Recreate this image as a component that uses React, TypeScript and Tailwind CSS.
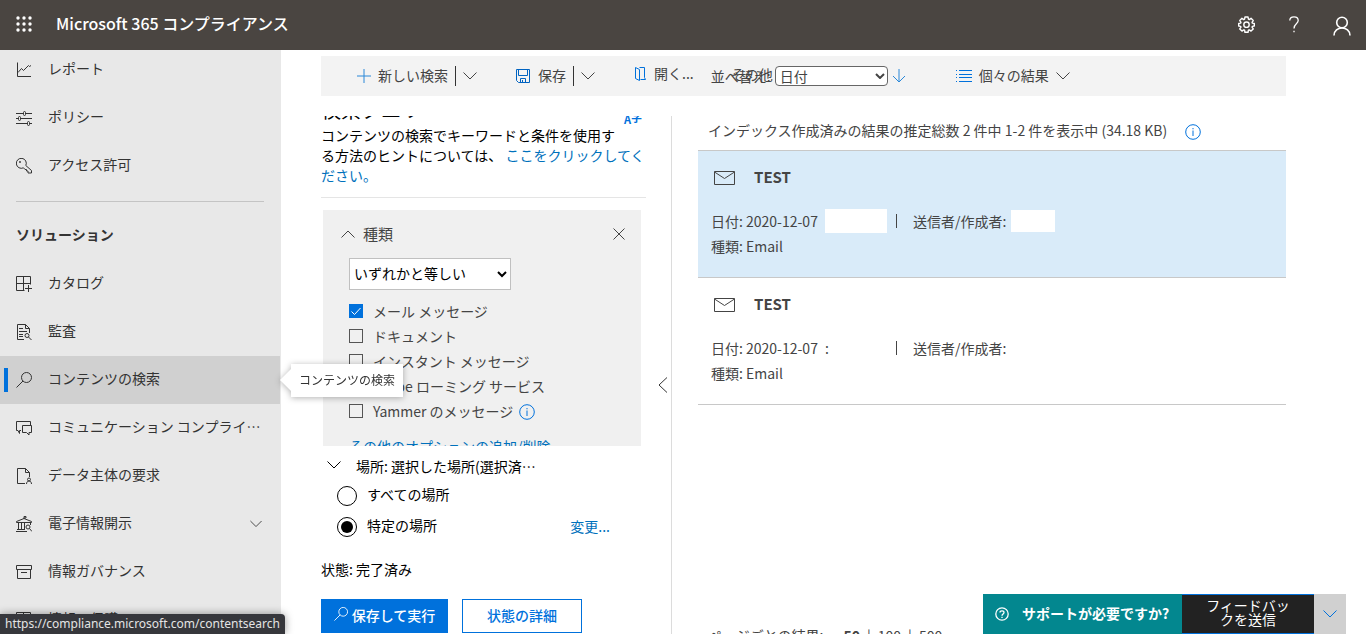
import React from "react";

interface IconProps {
  className?: string;
}

const ChevronIcon = ({ className = "w-3.5" }: IconProps) => (
  <svg viewBox="0 0 14 8" fill="none" stroke="currentColor" className={`h-2 shrink-0 ${className}`}>
    <path d="M.5.5 7 7 13.5.5" />
  </svg>
);

const NavSvg = ({ children }: { children: React.ReactNode }) => (
  <svg viewBox="0 0 16 16" fill="none" stroke="currentColor" className="w-4 h-4 shrink-0">
    {children}
  </svg>
);

const ReportIcon = () => (
  <NavSvg>
    <path d="M1.5.5v14H15M2 10.5l3.500-4 2 2 5-5 1 1 1.500-1" />
  </NavSvg>
);

const PolicyIcon = () => (
  <NavSvg>
    <path d="M0 3.500h7M10 3.500h6M0 8.500h2M5 8.500h11M0 13.500h11M14 13.500h2" />
    <rect x="7.500" y="1.500" width="2" height="4" rx="1" />
    <rect x="2.500" y="6.500" width="2" height="4" rx="1" />
    <rect x="11.500" y="11.500" width="2" height="4" rx="1" />
  </NavSvg>
);

const KeyIcon = () => (
  <NavSvg>
    <path d="M9.800 7.500a5 5 0 1 0-2.300 2.300L9 11.500h1.500v1.500H12v2h3.500v-2.500z" />
    <circle cx="4" cy="4" r=".6" />
  </NavSvg>
);

const CatalogIcon = () => (
  <NavSvg>
    <path d="M14.500 8.500v-8H.5v14h8M7.500.5v14M.5 7.500h14M12.500 9v7M9 12.500h7" />
  </NavSvg>
);

const AuditIcon = () => (
  <NavSvg>
    <path d="M8 15.500H1.500V.5h8l4 4V9M9.500.5v4h4M3 4.500h4M3 7.500h8M3 10.500h4M3 12.500h4" />
    <circle cx="11" cy="11.500" r="2" />
    <path d="m12.500 13 3 3" />
  </NavSvg>
);

const SearchIcon = ({ className = "w-4 h-4" }: IconProps) => (
  <svg viewBox="0 0 16 16" fill="none" stroke="currentColor" className={`shrink-0 ${className}`}>
    <circle cx="10.500" cy="5.500" r="5" />
    <path d="M7 9 .5 15.500" />
  </svg>
);

const ChatIcon = () => (
  <NavSvg>
    <path d="M5 10.500H3.500v3L2 10.500H.5v-9h14v4" />
    <path d="M6.500 5.500h9v7H13v2.500l-2.500-2.500h-4z" />
  </NavSvg>
);

const DataIcon = () => (
  <NavSvg>
    <path d="M9 15.500H1.500V.5h8l4 4V9M9.500.5v4h4" />
    <circle cx="13" cy="11.500" r="1.500" />
    <path d="M10.500 16c0-4 5-4 5 0" />
  </NavSvg>
);

const DiscoveryIcon = () => (
  <NavSvg>
    <path d="M8 3V.5h2V2H8M.5 6.500V5.500L8 2.500l7.500 3v1zM2.500 7v6M5.500 7v6M8.500 7v6M1 13.500h8M0 15.500h11" />
    <circle cx="12" cy="11" r="2" />
    <path d="m13.500 12.500 2.500 3M14.500 7v2" />
  </NavSvg>
);

const ArchiveIcon = () => (
  <NavSvg>
    <path d="M.5 1.500h15v4H.5zM1.500 5.500v9h13v-9M5 8.500h6" />
  </NavSvg>
);

const InfoIcon = () => (
  <svg viewBox="0 0 16 16" fill="none" stroke="currentColor" className="w-4 h-4 shrink-0 text-[#0071dc]">
    <circle cx="8" cy="8" r="7.300" />
    <path d="M8 6.500V12M8 4v1.300" />
  </svg>
);

const MailIcon = () => (
  <svg viewBox="0 0 21 14" fill="none" stroke="currentColor" className="w-[21px] h-3.5 shrink-0">
    <path d="M.5.5h20v13H.5zM.5 1l10 6.500L20.500 1" />
  </svg>
);

const GearIcon = () => (
  <svg viewBox="0 0 24 24" fill="none" stroke="currentColor" strokeWidth="2" className="w-[17px] h-[17px]">
    <path
      strokeLinejoin="round"
      d="M9.800 1.500h4.400l.5 3 1.200.5 2.500-1.700 3.100 3.100L19.800 8.900l.5 1.200 2.700.4v3.600l-2.700.5-.5 1.200 1.700 2.400-3.100 3.100-2.500-1.700-1.200.5-.5 2.900H9.800l-.5-2.900-1.200-.5-2.500 1.700-3.100-3.100 1.700-2.400-.5-1.200-2.700-.5v-3.600l2.700-.4.5-1.200-1.700-2.500 3.100-3.100L8.100 5l1.200-.5z"
    />
    <circle cx="12" cy="12.200" r="3.800" />
  </svg>
);

const navTop = [
  { label: "レポート", Icon: ReportIcon },
  { label: "ポリシー", Icon: PolicyIcon },
  { label: "アクセス許可", Icon: KeyIcon },
];

const navSolutions = [
  { label: "カタログ", Icon: CatalogIcon },
  { label: "監査", Icon: AuditIcon },
  { label: "コンテンツの検索", Icon: SearchIcon, active: true },
  { label: "コミュニケーション コンプライ…", Icon: ChatIcon },
  { label: "データ主体の要求", Icon: DataIcon },
  { label: "電子情報開示", Icon: DiscoveryIcon, expandable: true },
  { label: "情報ガバナンス", Icon: ArchiveIcon },
  { label: "情報の保護", Icon: CatalogIcon },
];

interface NavItemProps {
  label: string;
  Icon: React.ComponentType;
  active?: boolean;
  expandable?: boolean;
}

function NavItem({ label, Icon, active, expandable }: NavItemProps) {
  return (
    <li className={active ? "bg-[#d0d0d0]" : ""}>
      <a href="#" className="relative flex h-12 items-center gap-4 px-4">
        {active && <span className="absolute left-1 top-3 h-6 w-1 bg-[#0071dc]" />}
        <Icon />
        <span className="flex-1 whitespace-nowrap pb-1">{label}</span>
        {expandable && <ChevronIcon className="mr-0.5 w-3" />}
      </a>
    </li>
  );
}

function Header() {
  return (
    <header className="flex h-[50px] shrink-0 items-center bg-[#4a4541] pl-4 pr-[15px] pb-0.5 text-white">
      <button aria-label="アプリ起動ツール" className="mr-6">
        <svg viewBox="0 0 16 16" fill="currentColor" className="h-4 w-4">
          {[2, 8, 14].map((y) =>
            [2, 8, 14].map((x) => <circle key={`${x}-${y}`} cx={x} cy={y} r="1.700" />)
          )}
        </svg>
      </button>
      <h1 className="flex-1 pb-0.5 text-base font-medium">Microsoft 365 コンプライアンス</h1>
      <div className="flex items-center gap-[34px]">
        <button aria-label="設定">
          <GearIcon />
        </button>
        <button aria-label="ヘルプ">
          <svg viewBox="0 0 10 17" fill="none" stroke="currentColor" strokeWidth="1.300" className="h-[17px] w-2.5">
            <path d="M.8 4.500C.8 2 2.500.8 5 .8s4.200 1.400 4.200 3.700C9.200 8 5 7.500 5 12.500M5 14.700v1.600" />
          </svg>
        </button>
        <button aria-label="アカウント" className="pt-1">
          <svg viewBox="0 0 18 20" fill="none" stroke="currentColor" strokeWidth="1.600" className="h-5 w-[18px]">
            <circle cx="9" cy="6.500" r="5.300" />
            <path d="M1 19.500c0-10 16-10 16 0" />
          </svg>
        </button>
      </div>
    </header>
  );
}

function Sidebar() {
  return (
    <nav className="w-[281px] shrink-0 overflow-hidden bg-[#e8e8e8] pr-px text-sm text-[#333]">
      <ul className="-mt-1">
        {navTop.map((item) => (
          <NavItem key={item.label} {...item} />
        ))}
      </ul>
      <hr className="mx-4 mt-[11px] border-[#c4c4c4]" />
      <h2 className="mb-3.5 mt-5 px-4 text-sm font-bold leading-6">ソリューション</h2>
      <ul>
        {navSolutions.map((item) => (
          <NavItem key={item.label} {...item} />
        ))}
      </ul>
    </nav>
  );
}

function Toolbar() {
  return (
    <div className="flex h-10 shrink-0 items-center bg-[#f3f3f3] pl-9 text-sm text-[#444]">
      <button className="flex items-center gap-[7px]">
        <svg viewBox="0 0 14 14" stroke="currentColor" className="h-3.5 w-3.5 text-[#2b88d8]">
          <path d="M7 0v14M0 7h14" />
        </svg>
        <span className="pb-[3px]">新しい検索</span>
      </button>
      <span className="mx-[7px] h-5 w-px bg-[#333]" />
      <button aria-label="新しい検索のオプション">
        <ChevronIcon />
      </button>
      <button className="ml-[39px] flex items-center gap-2">
        <svg viewBox="0 0 14 14" fill="none" stroke="currentColor" className="h-3.5 w-3.5 text-[#0063c1]">
          <path d="M.5.5h13v13h-11l-2-2zM2.500.5v6h9v-6M4.500 13.500v-4h5v4M6.500 11v2.500" />
        </svg>
        <span className="pb-0.5">保存</span>
      </button>
      <span className="mx-[7px] h-5 w-px bg-[#333]" />
      <button aria-label="保存のオプション">
        <ChevronIcon />
      </button>
      <button className="ml-[39px] flex items-center gap-2 pb-1">
        <svg viewBox="0 0 12 14" fill="none" stroke="currentColor" className="h-3.5 w-3 text-[#0071dc]">
          <path d="M5.500.5h5v10l1 2h-5M1.500.500 5.500 2.500v11l-4-2z" />
        </svg>
        <span className="pb-[3px]">開く...</span>
      </button>
      <div className="ml-[17px] flex items-center">
        <label htmlFor="sort" className="relative w-16">
          並べ替え:
          <span className="absolute -top-0.5 left-5">その他</span>
        </label>
        <div className="relative text-[#444]">
          <select
            id="sort"
            className="block h-5 w-[113px] appearance-none rounded-sm border border-[#666] bg-white px-1 text-sm leading-4"
          >
            <option>日付</option>
          </select>
          <svg
            viewBox="0 0 10 6"
            fill="none"
            stroke="currentColor"
            strokeWidth="2"
            className="pointer-events-none absolute right-[3px] top-[7px] h-1.5 w-2.5"
          >
            <path d="m1 1 4 4 4-4" />
          </svg>
        </div>
      </div>
      <button aria-label="並べ替えの方向" className="ml-1">
        <svg viewBox="0 0 14 14" fill="none" stroke="currentColor" className="h-3.5 w-3.5 text-[#2b88d8]">
          <path d="M7 0v13M1 7l6 6 6-6" />
        </svg>
      </button>
      <button className="ml-[50px] flex items-center gap-[7px]">
        <svg viewBox="0 0 16 12" stroke="currentColor" className="h-3 w-4 text-[#0071dc]">
          <path d="M3 .5h13M3 4.500h13M3 7.500h13M3 11.500h13M0 .5h1M0 4.500h1M0 7.500h1M0 11.500h1" />
        </svg>
        <span className="pb-0.5">個々の結果</span>
        <ChevronIcon />
      </button>
    </div>
  );
}

const typeOptions = [
  { label: "メール メッセージ", checked: true },
  { label: "ドキュメント" },
  { label: "インスタント メッセージ" },
  { label: "Skype ローミング サービス" },
  { label: "Yammer のメッセージ", info: true },
];

function TypeCondition() {
  return (
    <section className="ml-0.5 mr-[5px] mt-3 h-[236px] shrink-0 overflow-hidden bg-[#f0f0f0] px-[18px] pt-3 text-[#444]">
      <div className="flex h-6 items-center justify-between text-[15px]">
        <button className="flex items-center gap-2">
          <ChevronIcon className="w-3.5 rotate-180" />
          種類
        </button>
        <button aria-label="削除" className="mr-[-2px]">
          <svg viewBox="0 0 12 12" stroke="currentColor" className="h-3 w-3">
            <path d="m.5.5 11 11M11.500.5l-11 11" />
          </svg>
        </button>
      </div>
      <div className="pl-2 pt-3">
        <select
          aria-label="種類の条件"
          className="block h-8 w-[162px] border border-[#c0c0c0] bg-white pb-0.5 text-sm text-black"
        >
          <option>いずれかと等しい</option>
        </select>
        <ul className="mt-[9px] text-sm">
          {typeOptions.map((option) => (
            <li key={option.label} className="flex h-[25px] items-center">
              <label className="flex items-center gap-2.5">
                <span className="relative mb-0.5 h-3.5 w-3.5">
                  <input
                    type="checkbox"
                    defaultChecked={option.checked}
                    className="peer block h-3.5 w-3.5 appearance-none border border-[#555] checked:border-[#0071dc] checked:bg-[#0071dc]"
                  />
                  <svg
                    viewBox="0 0 14 14"
                    fill="none"
                    stroke="white"
                    className="pointer-events-none absolute inset-0 hidden peer-checked:block"
                  >
                    <path d="m2.500 7.500 3 3 6-6.500" />
                  </svg>
                </span>
                <span className="pb-0.5">{option.label}</span>
              </label>
              {option.info && (
                <span className="ml-1.5">
                  <InfoIcon />
                </span>
              )}
            </li>
          ))}
        </ul>
        <a href="#" className="mt-2.5 block h-6 text-sm leading-6 text-[#0071bc]">
          その他のオプションの追加/削除
        </a>
      </div>
    </section>
  );
}

const radioClass =
  "h-5 w-5 appearance-none rounded-full border border-black bg-clip-content p-[3px] checked:bg-black";

function QueryPanel() {
  return (
    <div className="flex w-[325px] shrink-0 flex-col overflow-hidden text-sm text-black">
      <div className="-mt-5 flex h-7 shrink-0 items-center justify-between">
        <h2 className="text-xl">検索クエリ</h2>
        <button aria-label="言語" className="flex items-end pr-1 pt-4 text-[11px] font-bold leading-4 text-[#0071dc]">
          A<span className="pb-0.5">字</span>
        </button>
      </div>
      <p className="mt-px whitespace-nowrap border-b border-[#e5e5e5] pb-3 leading-5">
        コンテンツの検索でキーワードと条件を使用す
        <br />
        る方法のヒントについては、{" "}
        <a href="#" className="text-[#0071bc]">
          ここをクリックしてく
          <br />
          ださい。
        </a>
      </p>
      <TypeCondition />
      <button className="mt-2 flex h-[26px] shrink-0 items-center gap-[15px] pl-1.5">
        <ChevronIcon className="mb-1 w-3.5" />
        <span className="pb-0.5">場所: 選択した場所(選択済…</span>
      </button>
      <div className="flex h-[31px] shrink-0 items-center pl-4">
        <label className="flex items-center gap-2.5">
          <input type="radio" name="location" className={radioClass} />
          <span className="pb-[3px]">すべての場所</span>
        </label>
      </div>
      <div className="flex h-[31px] shrink-0 items-center justify-between pl-4 pr-9">
        <label className="flex items-center gap-2.5">
          <input type="radio" name="location" defaultChecked className={radioClass} />
          <span className="pb-[3px]">特定の場所</span>
        </label>
        <a href="#" className="pb-0.5 text-[#0071bc]">
          変更...
        </a>
      </div>
      <p className="mt-[15px] leading-6">状態: 完了済み</p>
      <div className="mt-[18px] flex shrink-0 gap-3.5">
        <button className="flex h-[34px] w-[127px] items-center justify-center gap-1 bg-[#0071dc] pb-0.5 font-medium text-white">
          <SearchIcon className="mb-0.5 h-3.5 w-3.5" />
          保存して実行
        </button>
        <button className="h-[34px] w-[120px] border border-[#0071dc] pb-0.5 font-medium text-[#0071dc]">
          状態の詳細
        </button>
      </div>
    </div>
  );
}

const results = [
  { id: 1, title: "TEST", date: "2020-12-07", time: "", type: "Email", selected: true },
  { id: 2, title: "TEST", date: "2020-12-07", time: ":", type: "Email", selected: false },
];

function ResultsPanel() {
  return (
    <div className="flex min-w-0 flex-1 flex-col text-sm text-[#444]">
      <div className="flex h-[34px] shrink-0 items-center gap-[18px] pb-0.5 pl-2.5">
        <span className="pb-1">インデックス作成済みの結果の推定総数 2 件中 1-2 件を表示中 (34.18 KB)</span>
        <InfoIcon />
      </div>
      <ul className="border-b border-[#c8c8c8]">
        {results.map((result) => (
          <li
            key={result.id}
            className={`border-t border-[#c8c8c8] px-[13px] pb-[18px] pt-3 ${result.selected ? "bg-[#d9ebf9]" : ""}`}
          >
            <div className="flex h-7 items-center gap-[19px] pl-[3px] pt-0.5">
              <MailIcon />
              <h3 className="pb-[3px] text-[15px] font-bold">{result.title}</h3>
            </div>
            <div className="mt-[17px] flex h-[25px] items-center">
              <span>日付: {result.date}</span>
              <span className="ml-[7px] h-6 w-[62px] bg-white leading-6">{result.time}</span>
              <span className="ml-[9px] mr-4 h-3.5 w-px bg-[#444]" />
              <span>送信者/作成者:</span>
              <span className="ml-[5px] h-[22px] w-11 bg-white" />
            </div>
            <p className="pt-px leading-[25px]">種類: {result.type}</p>
          </li>
        ))}
      </ul>
      <div className="mt-auto flex h-[11px] shrink-0 items-start pl-2.5 leading-6">
        <span>ページごとの結果:</span>
        <div className="ml-5 flex gap-[7px]">
          <b>50</b>
          <span>|</span>
          <a href="#">100</a>
          <span>|</span>
          <a href="#">500</a>
        </div>
      </div>
    </div>
  );
}

export default function App() {
  return (
    <div className="relative flex h-screen flex-col overflow-hidden bg-white font-['Noto_Sans_CJK_JP',sans-serif]">
      <Header />
      <div className="flex min-h-0 flex-1">
        <Sidebar />
        <main className="flex min-w-0 flex-1 flex-col pl-10 pr-20 pt-1.5">
          <Toolbar />
          <div className="mt-5 flex min-h-0 flex-1">
            <QueryPanel />
            <div className="mr-[26px] flex w-[26px] shrink-0 items-center justify-end border-r border-[#dcdcdc] pr-[3px] pt-5">
              <button aria-label="折りたたむ">
                <svg viewBox="0 0 10 16" fill="none" stroke="#333" className="h-4 w-2.5">
                  <path d="M9 .5 1 8l8 7.500" />
                </svg>
              </button>
            </div>
            <ResultsPanel />
          </div>
        </main>
      </div>

      {/* Tooltip */}
      <div className="absolute left-[291px] top-[364px] bg-white px-2 pb-px text-xs leading-8 text-[#333] drop-shadow-[0_1px_3px_rgba(0,0,0,0.3)]">
        <svg viewBox="0 0 11 22" fill="white" className="absolute -left-[11px] top-[5px] h-[22px] w-[11px]">
          <path d="M11 0 0 11l11 11z" />
        </svg>
        コンテンツの検索
      </div>

      {/* Link URL */}
      <div className="absolute bottom-0 left-0 h-5 rounded-tr bg-[#36373c] px-[5px] font-['Noto_Sans',sans-serif] text-xs leading-5 text-[#e4e4e4] shadow-[0_0_8px_rgba(0,0,0,0.4)]">
        https://compliance.microsoft.com/contentsearch
      </div>

      {/* Support bar */}
      <div className="absolute bottom-0 right-5 flex h-10 text-white">
        <button className="flex w-[199px] items-center gap-[13px] bg-[#03878f] pl-3 text-sm font-bold">
          <svg viewBox="0 0 14 14" fill="none" stroke="currentColor" strokeWidth="1.300" className="h-3.5 w-3.5">
            <circle cx="7" cy="7" r="6.200" />
            <path d="M5 5.500C5 3.200 9 3.200 9 5.500 9 7 7 7 7 8.800M7 9.800v1.200" />
          </svg>
          <span className="pb-[3px]">サポートが必要ですか?</span>
        </button>
        <button className="w-[132px] border-y border-[#0071dc] bg-[#222] px-6 pb-1 text-sm leading-[14px]">
          フィードバックを送信
        </button>
        <button aria-label="閉じる" className="flex w-8 items-center justify-center bg-[#d0d0d0] text-[#0071dc]">
          <ChevronIcon />
        </button>
      </div>
    </div>
  );
}
